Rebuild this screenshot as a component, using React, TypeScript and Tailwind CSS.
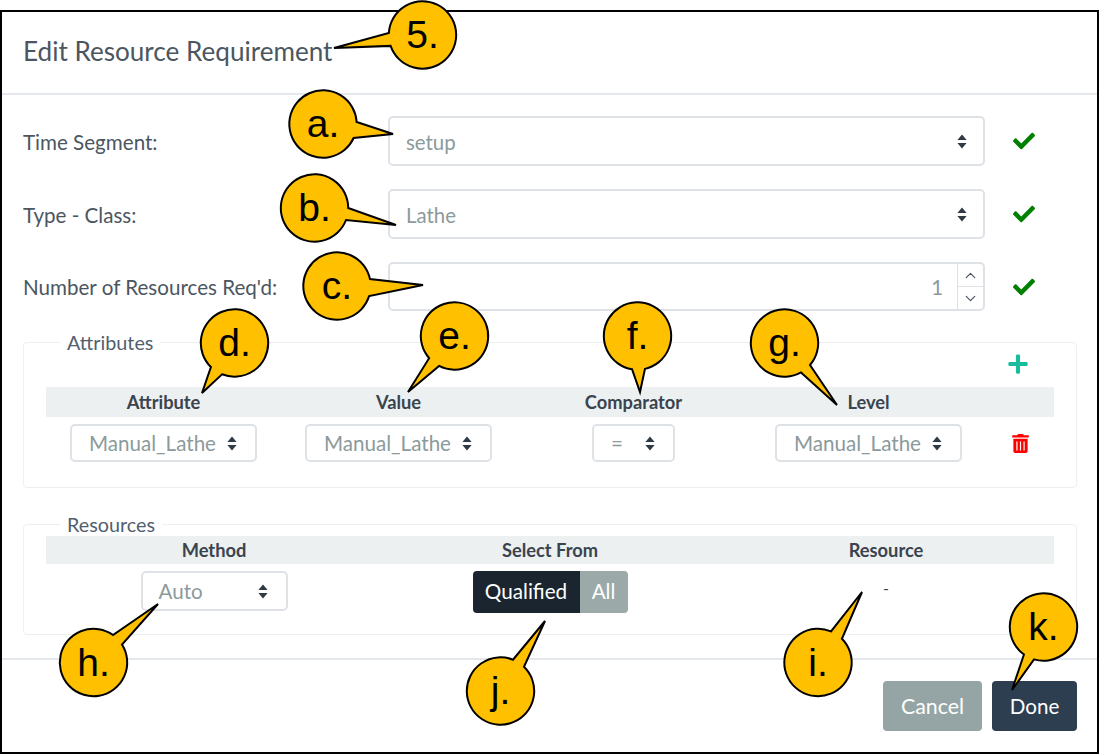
import type { ReactNode } from "react";
import { ChevronDown, ChevronUp } from "lucide-react";
import { FaCheck, FaPlus, FaTrashAlt } from "react-icons/fa";

function SortIcon() {
  return (
    <svg width="10" height="15" viewBox="0 0 10 15" className="shrink-0" aria-hidden="true">
      <path d="M5 0.5 L9.6 6 L0.4 6 Z M0.4 9 L9.6 9 L5 14.5 Z" fill="#2f3a44" />
    </svg>
  );
}

function Check() {
  return <FaCheck className="text-[22px] text-[#008000]" />;
}

function WideSelect({ value }: { value: string }) {
  return (
    <div className="flex h-full w-full items-center justify-between rounded-[5px] border-2 border-[#dee2e6] px-[16px] text-[20.4px] text-[#8b9a9b]">
      <span className="pt-[2px]">{value}</span>
      <SortIcon />
    </div>
  );
}

function SmallSelect({ value, className }: { value: string; className: string }) {
  return (
    <div className={`flex items-center justify-between rounded-[5px] border-2 border-[#dee2e6] text-[20.6px] text-[#8b9a9b] ${className}`}>
      <span>{value}</span>
      <SortIcon />
    </div>
  );
}

function FormRow({ label, height, children }: { label: string; height: string; children: ReactNode }) {
  return (
    <div className={`flex items-center ${height}`}>
      <div className="w-[365px] pt-[2px] text-[20.6px] text-[#4c5660]">{label}</div>
      <div className="h-full w-[597px]">{children}</div>
      <div className="ml-[28px] flex w-[22px] justify-center">
        <Check />
      </div>
    </div>
  );
}

function HeadCell({ children }: { children: ReactNode }) {
  return <div className="text-center text-[18.3px] font-bold leading-[24px] text-[#3a444e]">{children}</div>;
}

type Pt = [number, number];
type Note = { t: string; cx: number; cy: number; a: Pt; b: Pt; tip: Pt };

const R = 33.7;
const notes: Note[] = [
  { t: "5.", cx: 422.5, cy: 35, a: [388.9, 33], b: [390.3, 46], tip: [334, 48] },
  { t: "a.", cx: 323, cy: 124, a: [356.7, 122], b: [353.6, 138], tip: [393, 134] },
  { t: "b.", cx: 314.5, cy: 208, a: [348.2, 208], b: [346, 220], tip: [396, 225] },
  { t: "c.", cx: 337, cy: 286, a: [370.2, 279], b: [369, 296], tip: [423, 285] },
  { t: "d.", cx: 234.5, cy: 343, a: [211, 367], b: [222, 374.3], tip: [202, 393] },
  { t: "e.", cx: 454.5, cy: 336, a: [429, 358.3], b: [439, 366.2], tip: [408, 392] },
  { t: "f.", cx: 637.5, cy: 336, a: [632, 369.3], b: [645, 368.9], tip: [640, 392] },
  { t: "g.", cx: 784.5, cy: 343, a: [810, 365], b: [801, 372.4], tip: [837, 405] },
  { t: "h.", cx: 93.5, cy: 662.5, a: [113, 635], b: [122, 644.5], tip: [158, 604] },
  { t: "j.", cx: 500.5, cy: 691, a: [513, 659.7], b: [524, 666.8], tip: [545, 621] },
  { t: "i.", cx: 818, cy: 662.5, a: [831, 631.4], b: [842, 638.7], tip: [862, 592] },
  { t: "k.", cx: 1043.5, cy: 627, a: [1024, 654.4], b: [1034, 659.4], tip: [1012, 690] },
];

function bubble(n: Note) {
  const snap = (p: Pt): Pt => {
    const ang = Math.atan2(p[1] - n.cy, p[0] - n.cx);
    return [n.cx + R * Math.cos(ang), n.cy + R * Math.sin(ang)];
  };
  const a = snap(n.a);
  const b = snap(n.b);
  const cross = (a[0] - n.cx) * (b[1] - n.cy) - (a[1] - n.cy) * (b[0] - n.cx);
  const sweep = cross > 0 ? 0 : 1;
  return `M${a[0].toFixed(2)} ${a[1].toFixed(2)} A${R} ${R} 0 1 ${sweep} ${b[0].toFixed(2)} ${b[1].toFixed(2)} L${n.tip[0]} ${n.tip[1]} Z`;
}

function Callouts() {
  return (
    <svg width="1099" height="754" viewBox="0 0 1099 754" className="pointer-events-none absolute left-0 top-0">
      {notes.map((n) => (
        <g key={n.t}>
          <path d={bubble(n)} fill="#ffc000" stroke="#000000" strokeWidth="2" strokeLinejoin="miter" />
          <text
            x={n.cx}
            y={n.cy + 13}
            textAnchor="middle"
            fontSize="39"
            fill="#000000"
            style={{ fontFamily: '"Liberation Sans", Arial, sans-serif' }}
          >
            {n.t}
          </text>
        </g>
      ))}
    </svg>
  );
}

export default function App() {
  return (
    <div className="relative h-[754px] w-[1099px] overflow-hidden bg-white pt-[10px] font-['Lato',sans-serif]">
      <div className="flex h-[744px] w-full flex-col border-2 border-black">
        <div className="flex h-[83px] shrink-0 items-center border-b-2 border-[#e4e8ec] px-[21px] pb-[2px] text-[26.1px] text-[#4c5660]">
          Edit Resource Requirement
        </div>

        <div className="flex flex-1 flex-col px-[21px] pt-[21px]">
          <div className="flex flex-col gap-[23px]">
            <FormRow label="Time Segment:" height="h-[50px]">
              <WideSelect value="setup" />
            </FormRow>
            <FormRow label="Type - Class:" height="h-[50px]">
              <WideSelect value="Lathe" />
            </FormRow>
            <FormRow label="Number of Resources Req'd:" height="h-[49px]">
              <div className="flex h-full w-full items-stretch rounded-[5px] border-2 border-[#dee2e6]">
                <div className="flex flex-1 items-center justify-end pr-[14px] pt-[2px] text-[20.4px] text-[#8b9a9b]">1</div>
                <div className="flex w-[26px] flex-col border-l border-[#dee2e6] text-[#4c5660]">
                  <div className="flex flex-1 items-center justify-center border-b border-[#dee2e6]">
                    <ChevronUp size={17} strokeWidth={1.75} />
                  </div>
                  <div className="flex flex-1 items-center justify-center">
                    <ChevronDown size={17} strokeWidth={1.75} />
                  </div>
                </div>
              </div>
            </FormRow>
          </div>

          <fieldset className="mt-[20px] h-[157px] w-[1054px] rounded-[4px] border border-[#ecf0f1] px-[22px]">
            <legend className="ml-[14px] px-[7px] text-[19.8px] leading-[22px] text-[#51606e]">Attributes</legend>
            <div className="flex h-[34px] items-start justify-end pr-[25px]">
              <FaPlus className="text-[22px] text-[#18bc9c]" />
            </div>
            <div className="grid h-[30px] grid-cols-[235px_235px_235px_235px_68px] items-center bg-[#ecf0f1]">
              <HeadCell>Attribute</HeadCell>
              <HeadCell>Value</HeadCell>
              <HeadCell>Comparator</HeadCell>
              <HeadCell>Level</HeadCell>
              <div />
            </div>
            <div className="mt-[7px] grid h-[38px] grid-cols-[235px_235px_235px_235px_68px] items-center">
              <div className="flex justify-center">
                <SmallSelect value="Manual_Lathe" className="h-[38px] w-[187px] pl-[17px] pr-[18px]" />
              </div>
              <div className="flex justify-center">
                <SmallSelect value="Manual_Lathe" className="h-[38px] w-[187px] pl-[17px] pr-[18px]" />
              </div>
              <div className="flex justify-center">
                <SmallSelect value="=" className="h-[38px] w-[83px] pl-[17px] pr-[18px]" />
              </div>
              <div className="flex justify-center">
                <SmallSelect value="Manual_Lathe" className="h-[38px] w-[187px] pl-[17px] pr-[18px]" />
              </div>
              <div className="flex justify-center">
                <FaTrashAlt className="text-[19px] text-[#ff0000]" />
              </div>
            </div>
          </fieldset>

          <fieldset className="mt-[25px] h-[122px] w-[1054px] rounded-[4px] border border-[#ecf0f1] px-[22px]">
            <legend className="ml-[14px] px-[7px] text-[19.8px] leading-[23px] text-[#51606e]">Resources</legend>
            <div className="grid h-[28px] grid-cols-3 items-center bg-[#ecf0f1]">
              <HeadCell>Method</HeadCell>
              <HeadCell>Select From</HeadCell>
              <HeadCell>Resource</HeadCell>
            </div>
            <div className="mt-[7px] grid grid-cols-3 items-start">
              <div className="flex justify-center">
                <SmallSelect value="Auto" className="h-[40px] w-[147px] pl-[16px] pr-[18px]" />
              </div>
              <div className="flex justify-center">
                <div className="flex h-[42px] overflow-hidden rounded-[4px] text-[20.7px]">
                  <div className="flex w-[107px] items-center justify-center bg-[#1a252f] text-white">Qualified</div>
                  <div className="flex w-[48px] items-center justify-center bg-[#9ba9a9] text-white">All</div>
                </div>
              </div>
              <div className="pt-[7px] text-center text-[16px] leading-[20px] text-[#3a444e]">-</div>
            </div>
          </fieldset>
        </div>

        <div className="flex h-[94px] shrink-0 items-start justify-end gap-[10px] border-t-2 border-[#e4e8ec] pr-[20px] pt-[21px] text-white">
          <div className="flex h-[50px] w-[99px] items-center justify-center rounded-[4px] bg-[#95a5a6] text-[21.4px]">Cancel</div>
          <div className="flex h-[50px] w-[85px] items-center justify-center rounded-[4px] bg-[#2c3e50] text-[20.6px]">Done</div>
        </div>
      </div>
      <Callouts />
    </div>
  );
}
